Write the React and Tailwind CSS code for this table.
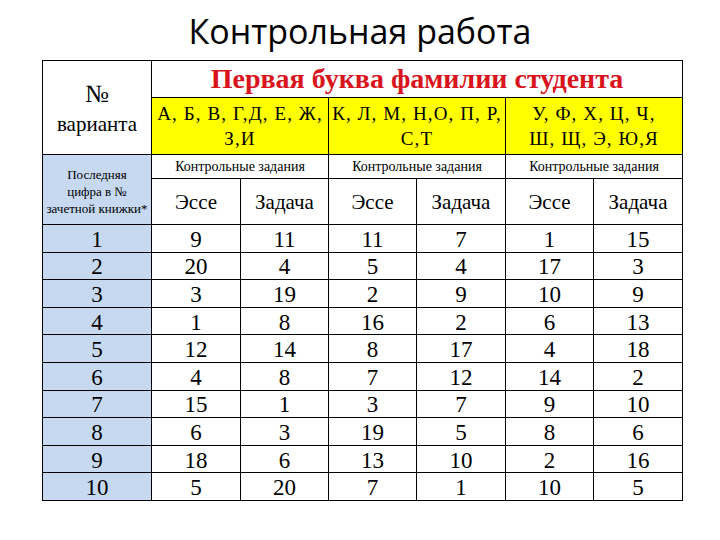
const data = [
  [1, 9, 11, 11, 7, 1, 15],
  [2, 20, 4, 5, 4, 17, 3],
  [3, 3, 19, 2, 9, 10, 9],
  [4, 1, 8, 16, 2, 6, 13],
  [5, 12, 14, 8, 17, 4, 18],
  [6, 4, 8, 7, 12, 14, 2],
  [7, 15, 1, 3, 7, 9, 10],
  [8, 6, 3, 19, 5, 8, 6],
  [9, 18, 6, 13, 10, 2, 16],
  [10, 5, 20, 7, 1, 10, 5],
]

const groups = [
  ['А, Б, В, Г,Д, Е, Ж,', 'З,И'],
  ['К, Л, М, Н,О, П, Р,', 'С,Т'],
  ['У, Ф, Х, Ц, Ч,', 'Ш, Щ, Э, Ю,Я'],
]

export default function App() {
  return (
    <div className="w-[720px] h-[540px] bg-white overflow-hidden">
      <div className="h-[60px] flex items-center justify-center pt-[2px]">
        <h1 className="text-[34px] leading-none text-black" style={{ fontFamily: '"Open Sans", sans-serif' }}>
          Контрольная работа
        </h1>
      </div>

      <table
        className="ml-[42px] w-[641px] table-fixed border-collapse border border-black text-black text-center"
        style={{ fontFamily: '"Liberation Serif", "Times New Roman", serif' }}
      >
        <colgroup>
          <col className="w-[109px]" />
          <col className="w-[89px]" />
          <col className="w-[88px]" />
          <col className="w-[88px]" />
          <col className="w-[89px]" />
          <col className="w-[88px]" />
          <col className="w-[89px]" />
        </colgroup>
        <tbody>
          <tr className="h-[37px]">
            <td rowSpan={2} className="border border-black p-0 align-middle pt-[2px]">
              <div className="text-[25px] leading-[31px]">№</div>
              <div className="text-[21px] leading-[30px]">варианта</div>
            </td>
            <td colSpan={6} className="border border-black p-0 text-[28px] font-bold text-[#d9141c] leading-none">
              Первая буква фамилии студента
            </td>
          </tr>
          <tr className="h-[57px]">
            {groups.map((g, i) => (
              <td key={i} colSpan={2} className="border border-black bg-[#ffff00] p-0 text-[19px] tracking-[1.1px] leading-[25px]">
                {g[0]}
                <br />
                {g[1]}
              </td>
            ))}
          </tr>
          <tr className="h-[24px]">
            <td rowSpan={2} className="border border-black bg-[#c6d9f1] p-0 pt-[3px] text-[13px] leading-[17px]">
              Последняя
              <br />
              цифра в №
              <br />
              зачетной книжки*
            </td>
            {groups.map((_, i) => (
              <td key={i} colSpan={2} className="border border-black p-0 text-[14px] leading-none">
                Контрольные задания
              </td>
            ))}
          </tr>
          <tr className="h-[46px]">
            {groups.map((_, i) => [
              <td key={'e' + i} className="border border-black p-0 pt-[2px] text-[21px]">Эссе</td>,
              <td key={'z' + i} className="border border-black p-0 pt-[2px] text-[21px]">Задача</td>,
            ])}
          </tr>
          {data.map((row) => (
            <tr key={row[0]} className="h-[27.6px]">
              {row.map((v, j) => (
                <td
                  key={j}
                  className={
                    'border border-black p-0 pt-[2px] text-[23px] leading-none ' + (j === 0 ? 'bg-[#c6d9f1]' : 'bg-white')
                  }
                >
                  {v}
                </td>
              ))}
            </tr>
          ))}
        </tbody>
      </table>
    </div>
  )
}
